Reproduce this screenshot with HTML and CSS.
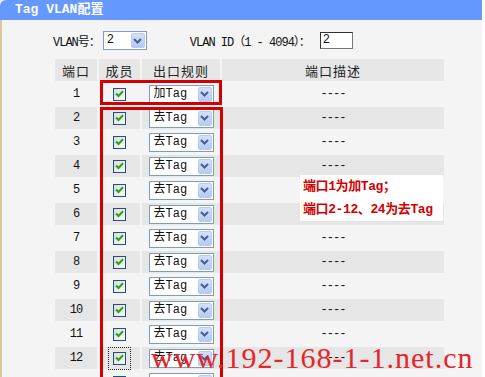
FILE: index.html
```html
<!DOCTYPE html>
<html>
<head>
<meta charset="utf-8">
<link rel="stylesheet" href="styles.css">
</head>
<body>
<div class="panel">
  <div class="title">Tag VLAN配置</div>
  <div class="content">
    <div class="vlanrow">
      <span class="lbl">VLAN号：</span>
      <span class="sel sel-vlan"><span class="sv">2</span><span class="arr"><svg width="9" height="6" viewBox="0 0 9 6"><path d="M1 1 L4.5 4.5 L8 1" fill="none" stroke="#4a5f8c" stroke-width="2"/></svg></span></span>
      <span class="lbl lbl-id">VLAN ID（1 - 4094）：</span>
      <span class="inp">2</span>
    </div>
    <table class="ports">
      <colgroup><col class="c1"><col class="c2"><col class="c3"><col class="c4"></colgroup>
      <thead>
        <tr><th>端口</th><th>成员</th><th>出口规则</th><th>端口描述</th></tr>
      </thead>
      <tbody id="rows"></tbody>
    </table>
  </div>
  <div class="redbox box1"></div>
  <div class="redbox box2"></div>
  <div class="note">
    <div>端口1为加Tag；</div>
    <div>端口2-12、24为去Tag</div>
  </div>
  <div class="wm">www.192-168-1-1.net.cn</div>
</div>
<script>
  var rows = document.getElementById('rows');
  var html = '';
  for (var i = 1; i <= 13; i++) {
    var last = i === 13;
    html += '<tr class="' + (i % 2 === 0 ? 'even' : 'odd') + '">' +
      '<td>' + (last ? '' : i) + '</td>' +
      '<td><span class="cb' + (i === 12 ? ' focus' : '') + '"><span class="box"><svg width="9" height="8" viewBox="0 0 9 8"><path d="M1 3.5 L3.5 6 L8 1.2" fill="none" stroke="#21a121" stroke-width="2"/></svg></span></span></td>' +
      '<td><span class="sel sel-rule"><span class="sv">' + (last ? '' : (i === 1 ? '加Tag' : '去Tag')) + '</span><span class="arr"><svg width="9" height="6" viewBox="0 0 9 6"><path d="M1 1 L4.5 4.5 L8 1" fill="none" stroke="#4a5f8c" stroke-width="2"/></svg></span></span></td>' +
      '<td>' + (last ? '' : '----') + '</td></tr>';
  }
  rows.innerHTML = html;
</script>
</body>
</html>
```

FILE: styles.css
```css
html, body {
  margin: 0;
  padding: 0;
  background: #ffffff;
}
body {
  width: 485px;
  height: 377px;
  overflow: hidden;
  font-family: "Liberation Mono", "Noto Sans CJK SC", monospace;
  font-size: 12px;
  letter-spacing: -1px;
  color: #111;
}
.panel {
  position: relative;
  width: 482px;
  height: 377px;
  overflow: hidden;
  background: #f4f4f4;
}
.title {
  height: 20px;
  line-height: 20px;
  background: #6699ff;
  border-top-left-radius: 6px;
  color: #fff;
  font-weight: bold;
  font-size: 13px;
  padding-left: 15px;
  letter-spacing: 0;
}
.content {
  border-left: 2px solid #dcc79f;
  height: 357px;
}
.vlanrow {
  display: flex;
  align-items: center;
  height: 19px;
  padding-top: 11px;
  padding-left: 51px;
}
.lbl {
  white-space: nowrap;
}
.sel {
  display: inline-flex;
  align-items: center;
  justify-content: space-between;
  box-sizing: border-box;
  height: 19px;
  border: 1px solid #7f9db9;
  background: #fff;
  letter-spacing: 0;
}
.sel-vlan {
  width: 44px;
  margin-left: 3px;
}
.sv {
  padding-left: 3px;
  line-height: 17px;
}
.arr {
  width: 14px;
  height: 15px;
  margin-right: 1px;
  box-sizing: border-box;
  border: 1px solid #b9cbf2;
  border-radius: 2px;
  background: linear-gradient(#d3e0fd, #b4c9f6);
  display: flex;
  align-items: center;
  justify-content: center;
}
.lbl-id {
  margin-left: 43px;
}
.inp {
  box-sizing: border-box;
  width: 33px;
  height: 17px;
  margin-left: 10px;
  border: 1px solid #333;
  border-right-color: #777;
  border-bottom-color: #777;
  background: #fff;
  padding-left: 2px;
  line-height: 15px;
}
.ports {
  border-collapse: separate;
  border-spacing: 2px;
  margin-top: 7px;
  margin-left: 51px;
  table-layout: fixed;
  width: 393px;
}
.c1 { width: 42px; }
.c2 { width: 41px; }
.c3 { width: 78px; }
.c4 { width: 222px; }
.ports th {
  height: 22px;
  padding: 0;
  background: #e6e6e6;
  font-family: "Noto Sans CJK SC", sans-serif;
  font-weight: normal;
  font-size: 13px;
  letter-spacing: 1px;
  color: #222;
}
.ports td {
  height: 22px;
  padding: 0;
  text-align: center;
  vertical-align: middle;
}
.ports tr.even td {
  background: #e6e6e6;
}
.cb {
  display: inline-flex;
  align-items: center;
  justify-content: center;
  width: 21px;
  height: 21px;
  box-sizing: border-box;
  vertical-align: middle;
}
.cb.focus {
  outline: 1px dotted #222;
}
.cb .box {
  display: flex;
  align-items: center;
  justify-content: center;
  width: 13px;
  height: 13px;
  box-sizing: border-box;
  border: 1px solid #1c5180;
  background: linear-gradient(135deg, #dcdcd5, #fbfbf9);
}
.sel-rule {
  width: 65px;
  vertical-align: middle;
  text-align: left;
}
.sel-rule .sv {
  padding-left: 4px;
}
.redbox {
  position: absolute;
  box-sizing: border-box;
  border: 3px solid #d40000;
}
.box1 {
  left: 100px;
  top: 80px;
  width: 122px;
  height: 25px;
}
.box2 {
  left: 100px;
  top: 107px;
  width: 123px;
  height: 300px;
}
.note {
  position: absolute;
  left: 300px;
  top: 175px;
  width: 143px;
  height: 46px;
  box-sizing: border-box;
  background: #fff;
  padding-left: 3px;
  color: #d40000;
  font-weight: bold;
  font-size: 13px;
  letter-spacing: -0.4px;
  line-height: 23px;
  white-space: nowrap;
}
.wm {
  position: absolute;
  left: 151px;
  top: 343px;
  font-family: "Liberation Serif", serif;
  font-size: 30px;
  line-height: 30px;
  letter-spacing: 1px;
  color: #e4262a;
  white-space: nowrap;
}
```
